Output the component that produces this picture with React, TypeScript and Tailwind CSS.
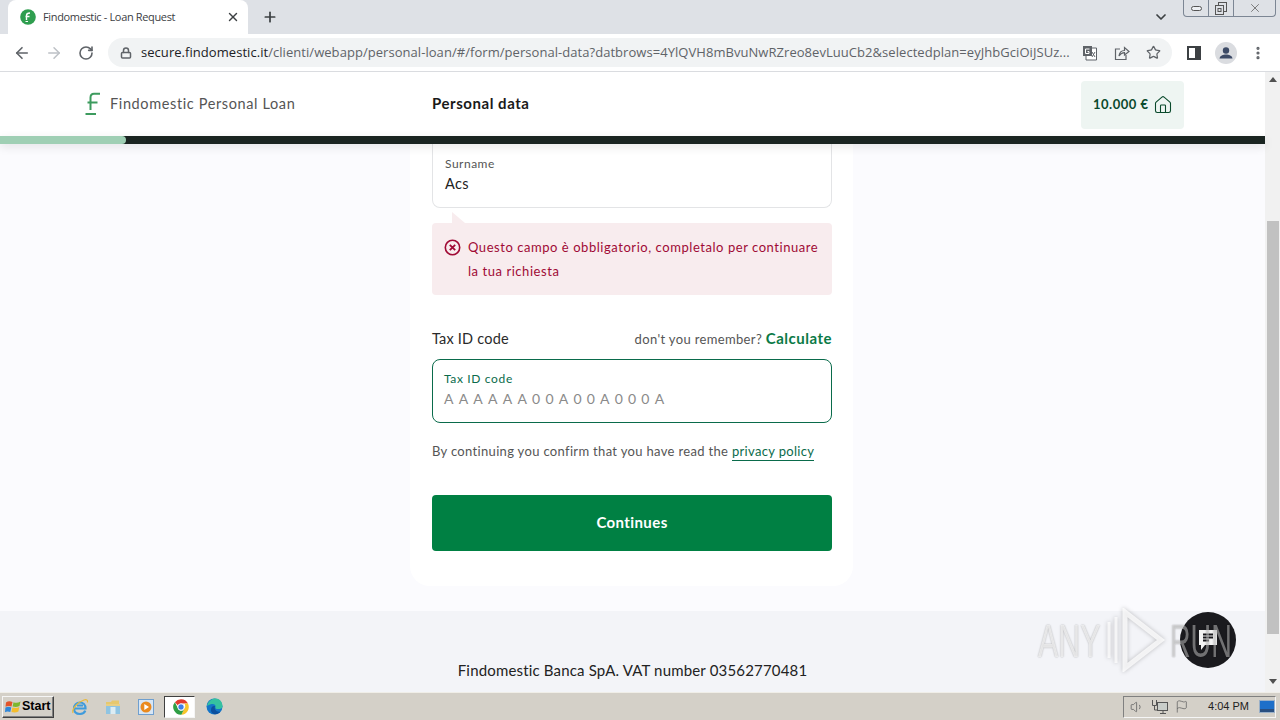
import { ArrowLeft, ArrowRight, RotateCw, Lock, Star, X, Plus, ChevronDown, Home, MoreVertical, Volume1, Flag } from "lucide-react";

function Favicon() {
  return (
    <svg width="16" height="16" viewBox="0 0 16 16" className="shrink-0">
      <circle cx="8" cy="8" r="7.8" fill="#2f9e4f" />
      <path d="M6.5 11V6.5C6.5 5 7.5 4 10 4M5.5 7.5H9.5" stroke="#fff" strokeWidth="1.4" fill="none" />
      <path d="M5.5 12.5H8" stroke="#fff" strokeWidth="1" />
    </svg>
  );
}

function Logo() {
  return (
    <svg width="16" height="24" viewBox="0 0 16 24" className="shrink-0">
      <path d="M5.5 18V5.5Q5.5 1.8 9 1.8H15M2.5 10.5H12.5" stroke="#3d9b5e" strokeWidth="2" fill="none" />
      <path d="M0.5 22H11" stroke="#3d9b5e" strokeWidth="2" />
    </svg>
  );
}

function TranslateIcon() {
  return (
    <svg width="16" height="16" viewBox="0 0 16 16">
      <path d="M7 3H14.5V15H4V11" fill="#fff" stroke="#5f6368" />
      <rect x="1" y="1" width="9" height="10" fill="#5f6368" />
      <path d="M7.5 4H3.5V8.5H7V6.5H5.5" stroke="#fff" fill="none" />
      <path d="M10 7L13 12M13 7L10 12" stroke="#5f6368" />
    </svg>
  );
}

function ShareIcon() {
  return (
    <svg width="16" height="16" viewBox="0 0 16 16" fill="none" stroke="#5f6368" strokeWidth="1.2">
      <path d="M6 4H1.5V14.5H12V10" />
      <path d="M5 11C5.5 7 8 5.5 10.5 5.5V2.5L15 6.5L10.5 10V7.7C8 7.7 6.5 8.7 5 11Z" />
    </svg>
  );
}

function PanelIcon() {
  return (
    <svg width="14" height="14" viewBox="0 0 14 14">
      <rect x="1" y="1" width="12" height="12" fill="#fff" stroke="#3c4043" strokeWidth="2" />
      <rect x="8" y="1" width="5" height="12" fill="#3c4043" />
    </svg>
  );
}

function Avatar() {
  return (
    <svg width="22" height="22" viewBox="0 0 22 22">
      <circle cx="11" cy="11" r="11" fill="#dadce0" />
      <circle cx="11" cy="8.5" r="3.2" fill="#3c4a66" />
      <path d="M4.5 16.5C5 13.5 8 12.5 11 12.5S17 13.5 17.5 16.5Z" fill="#3c4a66" />
    </svg>
  );
}

function ErrorIcon() {
  return (
    <svg width="17" height="17" viewBox="0 0 17 17" fill="none" className="shrink-0 mt-[4px]">
      <circle cx="8.5" cy="8.5" r="7.2" stroke="#a00a35" strokeWidth="1.6" />
      <path d="M5.8 5.8L11.2 11.2M11.2 5.8L5.8 11.2" stroke="#a00a35" strokeWidth="1.8" />
    </svg>
  );
}

function WinFlag() {
  return (
    <svg width="17" height="16" viewBox="0 0 17 16">
      <path d="M1 3.5C3 2 5 2 7.5 3L6.5 7.5C4.5 6.7 2.5 6.7 0.5 7.8Z" fill="#e2542a" />
      <path d="M8.5 3.2C10.5 4 13 4 15.5 2.5L14.5 7C12 8.3 10 8.3 7.6 7.6Z" fill="#7db72f" />
      <path d="M0.4 8.6C2.5 7.5 4.5 7.5 6.3 8.4L5.3 13C3.5 12.2 1.5 12.2 0 13.2Z" fill="#2f86d8" />
      <path d="M7.4 8.5C10 9.2 12 9.2 14.3 8L13.4 12.5C11 13.7 8.8 13.7 6.4 13Z" fill="#f5bd2c" />
    </svg>
  );
}

function IeIcon() {
  return (
    <svg width="18" height="18" viewBox="0 0 18 18" fill="none">
      <path d="M4 10.5H14.5C14.5 6.5 12 4.5 9 4.5C5.5 4.5 3 7 3 10.5C3 14 5.5 16 9 16C11.5 16 13.5 14.8 14.3 12.7" stroke="#3f9bdc" strokeWidth="2.2" />
      <path d="M6 7.5H12" stroke="#3f9bdc" strokeWidth="2" />
      <path d="M2 15C0.5 11 7 4 13 2C15.5 1.2 17 2 16.5 4.5" stroke="#e9b93a" strokeWidth="1.2" />
    </svg>
  );
}

function FolderIcon() {
  return (
    <svg width="16" height="16" viewBox="0 0 16 16">
      <path d="M1 3H6L7 1.5H14V6H1Z" fill="#e6c86e" />
      <rect x="1" y="5" width="14" height="10" fill="#8fc4e2" />
      <rect x="5.5" y="8" width="5" height="7" fill="#dcecf3" />
      <rect x="1" y="5" width="14" height="2" fill="#e8cf85" />
    </svg>
  );
}

function WmpIcon() {
  return (
    <svg width="16" height="16" viewBox="0 0 16 16">
      <rect x="0.5" y="0.5" width="15" height="15" fill="#d7e6f5" stroke="#6f9fcf" />
      <circle cx="8" cy="8" r="5.5" fill="#ea8a1f" />
      <path d="M6.3 5L11 8L6.3 11Z" fill="#fff" />
    </svg>
  );
}

function ChromeIcon() {
  return (
    <svg width="16" height="16" viewBox="0 0 16 16">
      <path d="M8 0.2A7.8 7.8 0 0 1 15 4.6H8A3.4 3.4 0 0 0 4.9 6.6L1.9 3.2A7.8 7.8 0 0 1 8 0.2Z" fill="#e33b2e" />
      <path d="M15 4.6A7.8 7.8 0 0 1 8.4 15.8L11.3 9.6A3.4 3.4 0 0 0 11 4.6Z" fill="#f8c52c" />
      <path d="M1.9 3.2A7.8 7.8 0 0 0 8.4 15.8L11 10.3A3.4 3.4 0 0 1 4.8 9Z" fill="#2f9e44" />
      <circle cx="8" cy="8" r="3.2" fill="#3f7fe8" stroke="#fff" strokeWidth="0.9" />
    </svg>
  );
}

function EdgeIcon() {
  return (
    <svg width="17" height="17" viewBox="0 0 17 17">
      <circle cx="8.5" cy="8.5" r="8" fill="#1374c8" />
      <path d="M1 8C2 3 6 0.5 9.5 0.5C13.5 0.5 16.5 3.5 16.5 8.5C16.5 10.5 14.5 11 12 11C10 11 9 10.5 9.5 8.5C10 7 8 5.5 5.5 6C3.5 6.4 2 7.3 1 8Z" fill="#35c1a0" />
      <path d="M5 12C5 8.5 7 7.5 9 8C8 11 10 14.5 14.5 13.5C12.5 16 9 17 6.8 15.5C5.5 14.6 5 13.5 5 12Z" fill="#0c4f9e" />
    </svg>
  );
}

function NetworkIcon() {
  return (
    <svg width="18" height="16" viewBox="0 0 18 16" fill="none" stroke="#555">
      <rect x="6.5" y="3.5" width="10" height="8" fill="#c9cdc9" />
      <path d="M9 14.5H15M12 11.5V14.5M1.5 1V6.5H5.5V1M3.5 6.5V11H6" />
    </svg>
  );
}

function ScreenIcon() {
  return (
    <svg width="16" height="13" viewBox="0 0 16 13">
      <rect x="0.5" y="0.5" width="15" height="12" fill="#1d6fc9" stroke="#9ab0c8" />
      <path d="M1 9H15V12H1Z" fill="#2a4f80" />
    </svg>
  );
}

function ChatIcon() {
  return (
    <svg width="22" height="24" viewBox="0 0 22 24">
      <path d="M2 2H20V17H8L4 22V17H2Z" fill="#f4f4f4" />
      <path d="M6 6.5H16M6 9.5H16M6 12.5H12" stroke="#1a1a1e" strokeWidth="1.8" />
    </svg>
  );
}

function PlayLogo() {
  return (
    <svg width="60" height="64" viewBox="0 0 60 64" fill="none" className="drop-shadow-[0_0_2px_rgba(0,0,0,0.3)]">
      <path d="M3 14V50" stroke="#ffffff" strokeOpacity="0.7" strokeWidth="3" />
      <path d="M10 9V55" stroke="#ffffff" strokeOpacity="0.7" strokeWidth="3" />
      <path d="M19 4L55 32L19 60Z" stroke="#ffffff" strokeOpacity="0.75" strokeWidth="5" />
    </svg>
  );
}

export default function App() {
  return (
    <div className="relative w-[1280px] h-[720px] overflow-hidden flex flex-col bg-white font-['Lato',sans-serif]">
      {/* Tab strip */}
      <div className="h-[34px] shrink-0 bg-[#dee1e6] flex items-start font-['Open_Sans',sans-serif]">
        <div className="ml-2 w-[240px] h-[34px] bg-white rounded-t-lg flex items-center pl-[12px] pr-[8px]">
          <Favicon />
          <span className="ml-[7px] flex-1 text-[11px] text-[#3c4043] tracking-[-0.35px] whitespace-nowrap">Findomestic - Loan Request</span>
          <X size={14} strokeWidth={2.4} className="text-[#3c4043]" />
        </div>
        <Plus size={16} strokeWidth={2.6} className="ml-[14px] mt-[9px] text-[#3c4043]" />
        <div className="flex-1" />
        <ChevronDown size={16} strokeWidth={2.6} className="mt-[9px] mr-[14px] text-[#3c4043]" />
        <div className="w-[93px] h-[17px] mr-[4px] flex border border-t-0 border-[#7c8694] rounded-b-[4px] text-[#5f6368]">
          <div className="w-[25px] border-r border-[#7c8694] flex items-center justify-center">
            <div className="w-[11px] h-[5px] border border-[#555] rounded-sm bg-[#eef0f3]" />
          </div>
          <div className="w-[25px] border-r border-[#7c8694] flex items-center justify-center">
            <svg width="12" height="13" viewBox="0 0 12 13" fill="none" stroke="#555">
              <rect x="3.5" y="0.5" width="8" height="9" />
              <rect x="0.5" y="3.5" width="8" height="9" fill="#dee1e6" />
              <rect x="3" y="6.5" width="3" height="3" />
            </svg>
          </div>
          <div className="flex-1 flex items-center justify-center">
            <X size={14} strokeWidth={1.4} className="text-[#666]" />
          </div>
        </div>
      </div>

      {/* Toolbar */}
      <div className="h-[38px] shrink-0 bg-white border-b border-[#dadce0] flex items-center font-['Open_Sans',sans-serif]">
        <ArrowLeft size={18} strokeWidth={2.2} className="ml-[13px] text-[#5f6368]" />
        <ArrowRight size={18} strokeWidth={2} className="ml-[14px] text-[#bdc1c6]" />
        <RotateCw size={16} strokeWidth={2.4} className="ml-[15px] text-[#5f6368]" />
        <div className="ml-[14px] w-[1064px] h-[29px] rounded-full bg-[#f1f3f4] flex items-center pl-[12px] pr-[10px]">
          <Lock size={12} strokeWidth={3} className="text-[#5f6368]" />
          <div className="ml-[9px] w-[935px] shrink-0 text-[13px] tracking-[0.05px] text-[#5f6368] whitespace-nowrap overflow-hidden">
            <span className="text-[#202124]">secure.findomestic.it</span>/clienti/webapp/personal-loan/#/form/personal-data?datbrows=4YlQVH8mBvuNwRZreo8evLuuCb2&selectedplan=eyJhbGciOiJSUz...
          </div>
          <div className="ml-[6px]"><TranslateIcon /></div>
          <div className="ml-[16px]"><ShareIcon /></div>
          <Star size={15} strokeWidth={2} className="ml-[16px] text-[#5f6368]" />
        </div>
        <div className="ml-[15px]"><PanelIcon /></div>
        <div className="ml-[14px]"><Avatar /></div>
        <MoreVertical size={16} strokeWidth={2.8} className="ml-[13px] text-[#5f6368]" />
      </div>

      {/* Window content */}
      <div className="flex-1 min-h-0 flex">
        <div className="w-[1265px] flex flex-col">
          <div className="h-[64px] shrink-0 bg-white flex items-center">
            <div className="w-[432px] pl-[85px] flex items-center gap-[9px]">
              <Logo />
              <span className="text-[14.5px] text-[#555] tracking-[0.62px] whitespace-nowrap">Findomestic Personal Loan</span>
            </div>
            <span className="flex-1 mb-[2px] text-[15px] font-bold text-[#1a1a1a] tracking-[0.55px]">Personal data</span>
            <div className="mr-[81px] w-[103px] h-[48px] mt-[2px] rounded bg-[#eef5f2] flex items-center pl-[12px] gap-[4px]">
              <span className="text-[13px] font-bold text-[#0a4a2c] tracking-[0.5px] whitespace-nowrap">10.000 €</span>
              <Home size={20} strokeWidth={1.3} className="text-[#0a4a2c]" />
            </div>
          </div>
          <div className="relative z-10 h-[8px] shrink-0 bg-[#1a2421] shadow-[0_3px_10px_rgba(0,0,0,0.10)]">
            <div className="h-full w-[126px] bg-[#9fcfb4] rounded-r-sm" />
          </div>

          <div className="flex-1 min-h-0 bg-[#fbfbfe] flex flex-col">
            <div className="ml-[410px] w-[443px] h-[442px] shrink-0 bg-white rounded-b-[20px] pl-[22px] pr-[21px] flex flex-col">
              <div className="h-[64px] shrink-0 border border-t-0 border-[#e3e4e6] rounded-b-lg px-[12px] pt-[12px] flex flex-col">
                <span className="text-[12px] leading-4 text-[#555] tracking-[0.5px]">Surname</span>
                <span className="mt-[2px] text-[14.5px] leading-5 text-[#222] tracking-[0.4px]">Acs</span>
              </div>

              <div className="relative mt-[15px] h-[72px] shrink-0 rounded-sm bg-[#f8ecee] flex pl-[12px] pr-[8px] pt-[12px]">
                <div className="absolute left-[20px] top-[-11px] w-[13px] h-[11px] bg-[#f8ecee] [clip-path:polygon(0_0,0_100%,100%_100%)]" />
                <ErrorIcon />
                <p className="ml-[7px] text-[13px] leading-6 text-[#a00a35] tracking-[0.55px]">Questo campo è obbligatorio, completalo per continuare la tua richiesta</p>
              </div>

              <div className="mt-[34px] h-[20px] shrink-0 flex items-center justify-between">
                <span className="text-[14.5px] text-[#2a2a2a] tracking-[0.2px]">Tax ID code</span>
                <span className="mb-[1px] text-[13px] text-[#555] tracking-[0.35px] whitespace-nowrap">don't you remember? <span className="text-[15px] font-bold text-[#0a7a46] tracking-[0.5px]">Calculate</span></span>
              </div>

              <div className="mt-[10px] h-[64px] shrink-0 border border-[#0a6b4b] rounded-lg px-[11px] pt-[11px] flex flex-col">
                <span className="text-[12px] leading-4 text-[#0a6b4b] tracking-[0.65px]">Tax ID code</span>
                <span className="mt-[2px] text-[14px] leading-5 text-[#8a8a8a] tracking-[5.2px] whitespace-nowrap">AAAAAA00A00A000A</span>
              </div>

              <p className="mt-[18px] h-[20px] shrink-0 text-[13px] leading-5 text-[#555] tracking-[0.33px] whitespace-nowrap">By continuing you confirm that you have read the <span className="text-[#0a6b4b] border-b border-[#0a6b4b] pb-[1px]">privacy policy</span></p>

              <div className="mt-[34px] h-[56px] shrink-0 rounded-[4px] bg-[#008043] flex items-center justify-center pb-[2px] text-[15px] font-bold text-white tracking-[0.4px]">Continues</div>
            </div>

            <div className="mt-[25px] flex-1 min-h-0 bg-[#f3f4f8] flex items-start justify-center">
              <span className="mt-[49px] text-[15px] leading-5 text-[#222] tracking-[0.17px] whitespace-nowrap">Findomestic Banca SpA. VAT number 03562770481</span>
            </div>
          </div>
        </div>

        {/* Scrollbar */}
        <div className="w-[15px] bg-[#f1f1f1] flex flex-col items-center">
          <div className="mt-[5px] w-0 h-0 border-x-[4px] border-x-transparent border-b-[5px] border-b-[#505050]" />
          <div className="mt-[139px] w-[12px] h-[413px] bg-[#c1c1c1]" />
          <div className="mt-[45px] w-0 h-0 border-x-[4px] border-x-transparent border-t-[5px] border-t-[#505050]" />
        </div>
      </div>

      {/* Taskbar */}
      <div className="h-[28px] shrink-0 bg-[#d4d0c8] border-t border-[#f0eee8] flex items-center">
        <div className="ml-[2px] w-[52px] h-[22px] bg-[#d4d0c8] border border-[#f5f5f5] border-r-[#404040] border-b-[#404040] shadow-[inset_-1px_-1px_0_#808080] flex items-center pl-[2px] gap-0 font-['Liberation_Sans',sans-serif] text-[12.5px] font-bold text-black">
          <WinFlag />
          <span>Start</span>
        </div>
        <div className="ml-[17px]"><IeIcon /></div>
        <div className="ml-[16px]"><FolderIcon /></div>
        <div className="ml-[17px]"><WmpIcon /></div>
        <div className="ml-[10px] w-[31px] h-[22px] bg-white border border-[#f5f5f5] border-l-[#404040] border-t-[#404040] flex items-center justify-center pl-[2px]"><ChromeIcon /></div>
        <div className="ml-[11px]"><EdgeIcon /></div>
        <div className="flex-1" />
        <div className="mr-[4px] w-[153px] h-[22px] border border-[#808080] border-r-[#f5f5f5] border-b-[#f5f5f5] flex items-center font-['Liberation_Sans',sans-serif] text-[11px] text-[#222]">
          <Volume1 size={18} strokeWidth={1.4} className="ml-[6px] text-[#666]" />
          <div className="ml-[7px]"><NetworkIcon /></div>
          <Flag size={17} strokeWidth={1.4} className="ml-[6px] text-[#666]" />
          <span className="ml-[19px] whitespace-nowrap">4:04 PM</span>
          <div className="ml-[10px]"><ScreenIcon /></div>
        </div>
      </div>

      {/* Overlays: chat button and watermark */}
      <div className="absolute left-[1180px] top-[612px] w-[56px] h-[56px] rounded-full bg-[#1a1a1e] flex items-center justify-center">
        <ChatIcon />
      </div>
      <div className="absolute left-[1038px] top-[618px] font-['Liberation_Sans',sans-serif] text-[46px] leading-none text-white/70 [text-shadow:0_0_2px_rgba(0,0,0,0.35)] scale-x-[0.66] origin-left whitespace-nowrap">
        ANY
      </div>
      <div className="absolute left-[1106px] top-[608px]"><PlayLogo /></div>
      <div className="absolute left-[1170px] top-[618px] font-['Liberation_Sans',sans-serif] text-[46px] leading-none text-white/40 [text-shadow:0_0_2px_rgba(0,0,0,0.35)] scale-x-[0.62] origin-left whitespace-nowrap">
        RUN
      </div>
    </div>
  );
}
